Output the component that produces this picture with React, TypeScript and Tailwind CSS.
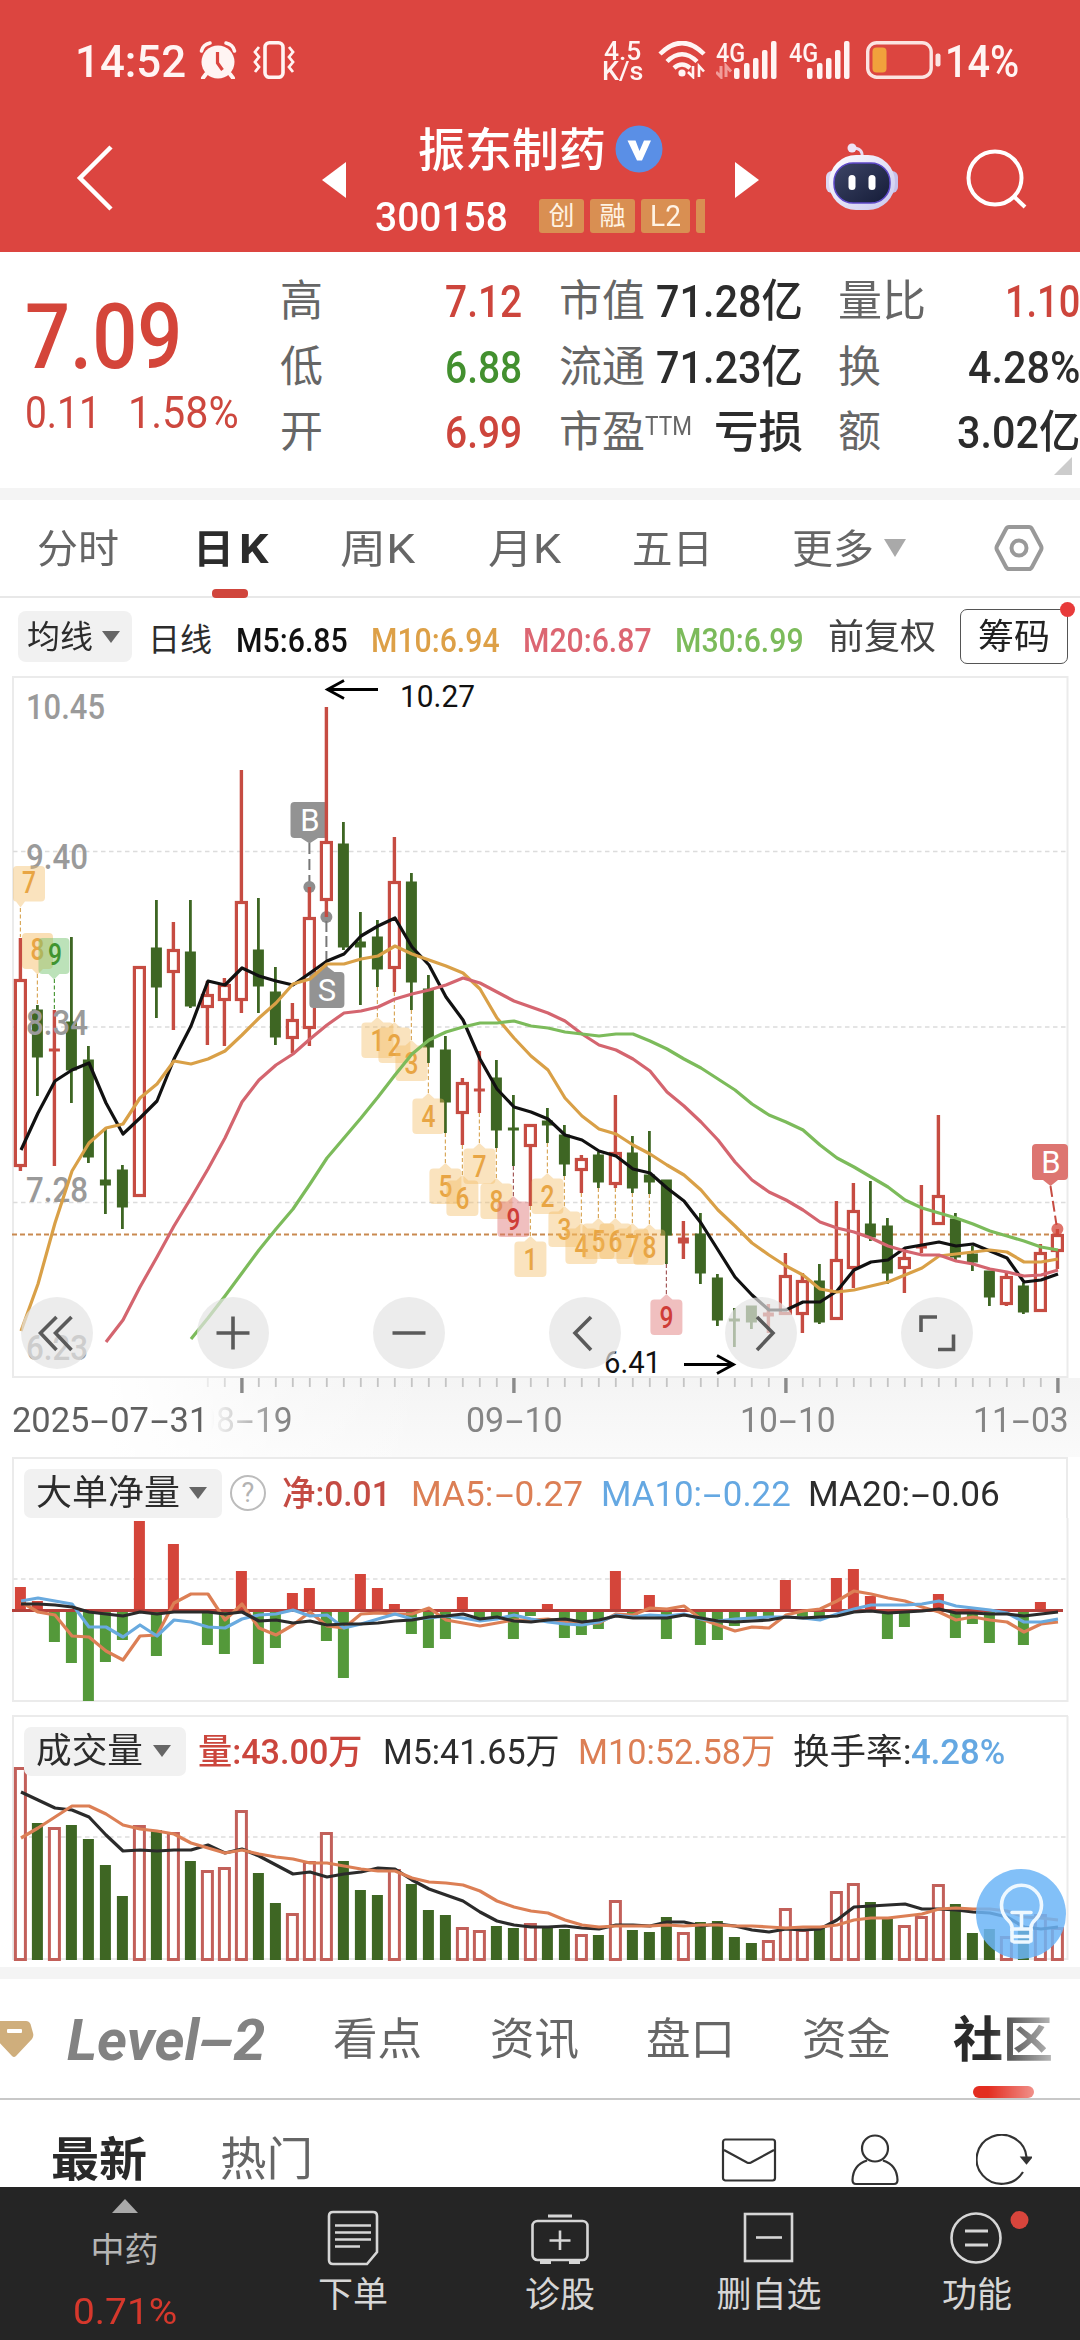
import { useLayoutEffect, useRef, useState, type ReactNode } from "react";

/* ---------- text helpers ---------- */

function wide(text: string): ReactNode {
  return text.split("-").map((part, i) => (
    <span key={i}>
      {i > 0 && (
        <span className="inline-block w-[0.6em] text-center">
          <span className="inline-block scale-x-[1.9]">-</span>
        </span>
      )}
      {part}
    </span>
  ));
}

/* One line of text stretched horizontally to the width of its box. */
function Fit({ className = "", children }: { className?: string; children: string }) {
  const outer = useRef<HTMLSpanElement>(null);
  const inner = useRef<HTMLSpanElement>(null);
  const [scale, setScale] = useState(1);
  useLayoutEffect(() => {
    if (outer.current && inner.current) {
      setScale(outer.current.clientWidth / inner.current.offsetWidth);
    }
  }, []);
  return (
    <span ref={outer} className={`block shrink-0 leading-none ${className}`}>
      <span
        ref={inner}
        className="inline-block origin-left whitespace-nowrap"
        style={{ transform: `scaleX(${scale})` }}
      >
        {children.includes("-") ? wide(children) : children}
      </span>
    </span>
  );
}

/* ---------- chart data ---------- */

type Candle = [kind: "r" | "g", high: number, top: number, bottom: number, low: number];

const X = (i: number) => 20.4 + 17 * i;

const candles: Candle[] = [
  ["r", 939, 980, 1168, 1172], ["g", 1006, 1011, 1059, 1097], ["r", 1011, 1050, 1052, 1167],
  ["g", 938, 1023, 1072, 1104], ["g", 1047, 1061, 1159, 1164], ["g", 1130, 1181, 1187, 1215],
  ["g", 1166, 1171, 1209, 1230], ["r", 967, 967, 1198, 1198], ["g", 901, 949, 989, 1019],
  ["r", 923, 950, 974, 1031], ["g", 901, 953, 1008, 1009], ["r", 982, 995, 1009, 1046],
  ["r", 979, 985, 1002, 1047], ["r", 771, 902, 1002, 1014], ["g", 899, 951, 988, 1014],
  ["g", 968, 993, 1039, 1046], ["r", 1004, 1020, 1040, 1054], ["r", 888, 918, 1030, 1047],
  ["r", 708, 842, 902, 918], ["g", 823, 845, 949, 951], ["g", 913, 943, 949, 1006],
  ["g", 921, 938, 971, 988], ["r", 838, 882, 970, 993], ["g", 874, 883, 984, 1011],
  ["g", 976, 990, 1049, 1064], ["g", 1037, 1051, 1104, 1134], ["r", 1079, 1083, 1115, 1146],
  ["r", 1052, 1090, 1092, 1114], ["g", 1061, 1079, 1132, 1149], ["g", 1096, 1129, 1131, 1167],
  ["r", 1125, 1125, 1148, 1207], ["g", 1109, 1122, 1127, 1144], ["g", 1126, 1136, 1166, 1177],
  ["r", 1156, 1159, 1172, 1194], ["g", 1153, 1156, 1184, 1189], ["r", 1096, 1153, 1186, 1189],
  ["g", 1137, 1154, 1190, 1194], ["g", 1132, 1176, 1184, 1195], ["g", 1181, 1181, 1237, 1265],
  ["r", 1222, 1239, 1245, 1260], ["g", 1214, 1235, 1275, 1285], ["g", 1275, 1279, 1322, 1327],
  ["g", 1309, 1320, 1322, 1348], ["g", 1307, 1307, 1324, 1330], ["r", 1305, 1314, 1318, 1334],
  ["r", 1254, 1276, 1316, 1316], ["r", 1274, 1281, 1316, 1334], ["g", 1265, 1282, 1324, 1325],
  ["r", 1202, 1260, 1321, 1321], ["r", 1184, 1211, 1270, 1289], ["g", 1182, 1225, 1239, 1242],
  ["g", 1219, 1227, 1275, 1285], ["r", 1250, 1258, 1270, 1294], ["r", 1186, 1247, 1250, 1254],
  ["r", 1116, 1196, 1226, 1226], ["g", 1214, 1220, 1259, 1262], ["g", 1247, 1255, 1264, 1272],
  ["g", 1272, 1272, 1299, 1307], ["r", 1274, 1277, 1306, 1307], ["g", 1284, 1287, 1314, 1315],
  ["r", 1245, 1253, 1313, 1313], ["r", 1230, 1235, 1253, 1270],
];

const ma5 = [1151, 1114, 1082, 1071, 1064, 1104, 1135, 1119, 1102, 1060, 1027, 982, 986, 969, 977, 982, 986, 974, 962, 955, 937, 927, 919, 948, 966, 998, 1021, 1060, 1090, 1108, 1113, 1120, 1136, 1141, 1152, 1157, 1170, 1174, 1189, 1202, 1224, 1251, 1278, 1296, 1311, 1311, 1303, 1303, 1292, 1271, 1263, 1261, 1249, 1246, 1243, 1247, 1245, 1252, 1259, 1283, 1281, 1275];
const ma10 = [1332, 1285, 1224, 1172, 1144, 1129, 1125, 1099, 1085, 1062, 1065, 1060, 1052, 1036, 1019, 1004, 985, 980, 965, 965, 960, 957, 947, 955, 961, 967, 974, 990, 1019, 1039, 1057, 1071, 1099, 1117, 1130, 1135, 1146, 1155, 1166, 1176, 1191, 1211, 1227, 1244, 1256, 1267, 1276, 1290, 1293, 1291, 1287, 1283, 1276, 1269, 1257, 1255, 1253, 1251, 1253, 1263, 1263, 1260];
const ma20 = [1343, 1321, 1288, 1258, 1227, 1199, 1170, 1139, 1103, 1081, 1066, 1055, 1040, 1026, 1014, 1012, 1008, 1000, 995, 991, 986, 979, 984, 993, 1002, 1008, 1014, 1022, 1035, 1046, 1051, 1060, 1072, 1093, 1107, 1123, 1141, 1163, 1181, 1193, 1201, 1211, 1223, 1229, 1233, 1239, 1247, 1252, 1256, 1256, 1262, 1265, 1270, 1273, 1277, 1276, 1271];
const ma30 = [1340, 1319, 1297, 1274, 1251, 1230, 1210, 1185, 1159, 1139, 1119, 1098, 1076, 1055, 1041, 1033, 1028, 1024, 1024, 1022, 1027, 1029, 1033, 1035, 1037, 1035, 1035, 1042, 1050, 1060, 1069, 1080, 1091, 1105, 1116, 1123, 1131, 1146, 1159, 1168, 1178, 1188, 1201, 1209, 1214, 1219, 1225, 1232, 1237, 1242, 1248, 1251];

const net = [1588, 1602, 1643, 1664, 1702, 1663, 1641, 1522, 1657, 1545, 1611, 1646, 1655, 1572, 1665, 1649, 1594, 1589, 1642, 1679, 1575, 1589, 1605, 1635, 1649, 1640, 1598, 1620, 1618, 1640, 1617, 1605, 1639, 1636, 1630, 1572, 1617, 1596, 1640, 1611, 1646, 1641, 1627, 1618, 1618, 1581, 1618, 1618, 1579, 1570, 1597, 1640, 1628, 1611, 1595, 1639, 1625, 1644, 1611, 1646, 1603, 1611];
const net5 = [1603, 1613, 1616, 1637, 1638, 1652, 1661, 1637, 1636, 1604, 1595, 1595, 1621, 1605, 1629, 1636, 1626, 1613, 1627, 1629, 1615, 1614, 1615, 1615, 1609, 1621, 1624, 1627, 1624, 1621, 1621, 1620, 1623, 1625, 1624, 1615, 1616, 1609, 1610, 1607, 1620, 1626, 1632, 1628, 1629, 1616, 1612, 1610, 1602, 1592, 1595, 1599, 1602, 1608, 1613, 1621, 1618, 1621, 1623, 1633, 1625, 1623];
const net10 = [1602, 1599, 1602, 1605, 1628, 1628, 1638, 1626, 1637, 1621, 1623, 1628, 1629, 1620, 1616, 1615, 1611, 1617, 1616, 1629, 1625, 1620, 1615, 1620, 1619, 1617, 1619, 1622, 1620, 1616, 1620, 1623, 1625, 1626, 1623, 1616, 1618, 1616, 1617, 1615, 1620, 1622, 1620, 1619, 1618, 1618, 1619, 1621, 1615, 1610, 1606, 1606, 1606, 1605, 1602, 1607, 1609, 1611, 1614, 1623, 1623, 1620];
const net20 = [1605, 1605, 1606, 1608, 1613, 1615, 1617, 1613, 1615, 1613, 1613, 1613, 1615, 1613, 1622, 1621, 1624, 1622, 1626, 1625, 1625, 1624, 1622, 1621, 1618, 1617, 1615, 1620, 1618, 1622, 1623, 1621, 1620, 1623, 1621, 1617, 1619, 1619, 1619, 1616, 1619, 1622, 1623, 1622, 1621, 1618, 1619, 1618, 1617, 1613, 1612, 1614, 1613, 1612, 1610, 1614, 1614, 1615, 1615, 1617, 1615, 1613];

const vol = [1768, 1824, 1828, 1826, 1840, 1866, 1897, 1826, 1831, 1833, 1862, 1871, 1868, 1811, 1874, 1904, 1914, 1862, 1833, 1862, 1891, 1896, 1870, 1885, 1911, 1916, 1928, 1931, 1927, 1929, 1924, 1928, 1930, 1935, 1936, 1901, 1931, 1933, 1918, 1933, 1923, 1922, 1938, 1944, 1941, 1909, 1930, 1929, 1892, 1884, 1903, 1920, 1926, 1917, 1885, 1905, 1934, 1930, 1937, 1930, 1915, 1928];
const vol5 = [1793, 1801, 1809, 1811, 1818, 1836, 1852, 1851, 1852, 1851, 1851, 1846, 1854, 1850, 1857, 1866, 1875, 1873, 1878, 1875, 1873, 1869, 1870, 1881, 1890, 1896, 1902, 1913, 1922, 1926, 1928, 1928, 1927, 1929, 1930, 1926, 1926, 1927, 1923, 1923, 1927, 1925, 1927, 1931, 1933, 1930, 1931, 1930, 1921, 1908, 1907, 1906, 1905, 1910, 1910, 1911, 1913, 1914, 1918, 1928, 1930, 1928];
const vol10 = [1839, 1829, 1818, 1807, 1807, 1815, 1826, 1830, 1832, 1835, 1844, 1849, 1854, 1851, 1855, 1858, 1860, 1864, 1864, 1867, 1870, 1872, 1872, 1879, 1883, 1884, 1886, 1892, 1902, 1908, 1912, 1914, 1921, 1926, 1928, 1927, 1927, 1927, 1926, 1927, 1926, 1926, 1927, 1927, 1928, 1929, 1928, 1928, 1926, 1921, 1919, 1919, 1917, 1915, 1910, 1909, 1910, 1910, 1912, 1918, 1919, 1921];

/* index of candle, digit, tone */
const tagsBelow: [number, string, "o" | "r"][] = [
  [21, "1", "o"], [22, "2", "o"], [23, "3", "o"], [24, "4", "o"], [25, "5", "o"], [26, "6", "o"],
  [27, "7", "o"], [28, "8", "o"], [29, "9", "r"], [30, "1", "o"], [31, "2", "o"], [32, "3", "o"],
  [33, "4", "o"], [34, "5", "o"], [35, "6", "o"], [36, "7", "o"], [37, "8", "o"], [38, "9", "r"],
];

function Line({ data, start = 0, color, width = 3.2 }: { data: number[]; start?: number; color: string; width?: number }) {
  const points = data.map((y, i) => `${X(start + i) + 0.6},${y}`).join(" ");
  return <polyline points={points} fill="none" stroke={color} strokeWidth={width} strokeLinejoin="round" />;
}

function CandleShape({ i, c }: { i: number; c: Candle }) {
  const [kind, high, top, bottom, low] = c;
  const x = X(i);
  if (kind === "g") {
    return (
      <g fill="#3e6623">
        <rect x={x - 1.4} y={high} width={2.8} height={low - high} />
        <rect x={x - 5.5} y={top - 0.5} width={11} height={Math.max(bottom - top, 3)} />
      </g>
    );
  }
  if (bottom - top < 8) {
    return (
      <g fill="#c64c42">
        <rect x={x - 1.7} y={high} width={3.4} height={low - high} />
        <rect x={x - 5.5} y={top - 0.5} width={11} height={Math.max(bottom - top, 3)} />
      </g>
    );
  }
  return (
    <g>
      <rect x={x - 1.7} y={high} width={3.4} height={top - high} fill="#c64c42" />
      <rect x={x - 1.7} y={bottom} width={3.4} height={low - bottom} fill="#c64c42" />
      <rect x={x - 5} y={top + 1.5} width={10} height={bottom - top - 3} fill="#fff" stroke="#c64c42" strokeWidth={3.2} />
    </g>
  );
}

function DigitTag({ i, digit, tone }: { i: number; digit: string; tone: "o" | "r" }) {
  const x = X(i);
  const low = candles[i][4];
  const red = tone === "r";
  return (
    <g>
      <line x1={x} x2={x} y1={low} y2={low + 30} stroke={red ? "#a45a5a" : "#d9a95c"} strokeWidth={1.2} strokeDasharray="4 2.5" />
      <path
        d={`M${x} ${low + 30} l6 5.5 h6 q4 0 4 4 v27.500 q0 4 -4 4 h-24 q-4 0 -4 -4 v-27.500 q0 -4 4 -4 h6 z`}
        fill={red ? "#dd7070" : "#f3b95c"}
        fillOpacity={red ? 0.45 : 0.4}
      />
      <text x={x} y={low + 64} textAnchor="middle" fontSize={31} fontWeight={500} fill={red ? "#cf3d38" : "#e8a544"} textLength={14} lengthAdjust="spacingAndGlyphs">
        {digit}
      </text>
    </g>
  );
}

function PriceChart() {
  const axis: [string, number, number][] = [["10.45", 720, 79], ["9.40", 870, 62], ["8.34", 1036, 62], ["7.28", 1203, 62], ["6.23", 1361, 62]];
  return (
    <svg viewBox="0 672 1080 708" className="block h-[708px] w-[1080px] overflow-visible" fontFamily='Roboto, "Noto Sans CJK SC", sans-serif'>
      <rect x={13} y={678} width={1054.500} height={700} fill="none" stroke="#ebebeb" strokeWidth={2} />
      {[852.500, 1028, 1203.500].map((y) => (
        <line key={y} x1={13} x2={1067} y1={y} y2={y} stroke="#dcdcdc" strokeWidth={1.3} strokeDasharray="4.500 3.500" />
      ))}
      <line x1={12} x2={1060} y1={1235.500} y2={1235.500} stroke="#c98a50" strokeWidth={2.2} strokeDasharray="5 3" />

      {/* trade marks */}
      <g>
        <path d="M295 803 h29 q4 0 4 4 v28 q0 4 -4 4 h-6 l-8.500 5.500 l-8.500 -5.500 h-6.500 q-4 0 -4 -4 v-28 q0 -4 4 -4z" fill="#939393" />
        <text x={310} y={832} textAnchor="middle" fontSize={31} fill="#fff">B</text>
        <line x1={309.400} x2={309.400} y1={844} y2={884} stroke="#777" strokeWidth={2} strokeDasharray="11 5" />
        <circle cx={309.400} cy={888} r={6} fill="#8e8e8e" />
        <circle cx={326.400} cy={918} r={6} fill="#8e8e8e" />
      </g>

      {candles.map((c, i) => <CandleShape key={i} i={i} c={c} />)}

      <g>
        <line x1={326.400} x2={326.400} y1={922} y2={968} stroke="#777" strokeWidth={2} strokeDasharray="11 4" />
        <path d="M326.400 967 l8 6 h6 q4 0 4 4 v28 q0 4 -4 4 h-27 q-4 0 -4 -4 v-28 q0 -4 4 -4 h5z" fill="#939393" />
        <text x={327} y={1002} textAnchor="middle" fontSize={31} fill="#fff">S</text>
      </g>

      {axis.map(([label, y, w]) => (
        <text key={label} x={26} y={y} fontSize={35} fontWeight={500} fill="#9a9a9a" textLength={w} lengthAdjust="spacingAndGlyphs">{label}</text>
      ))}

      {/* digit marks above the first candles */}
      <g fontSize={31} fontWeight={500} textAnchor="middle">
        <line x1={20.400} x2={20.400} y1={909} y2={938} stroke="#d9a95c" strokeWidth={1.2} strokeDasharray="4 2.500" />
        <path d="M17 867 h24 q4 0 4 4 v27.500 q0 4 -4 4 h-16 l-4.500 6 l-4.500 -6 q-3 0 -3 -4 v-27.500 q0 -4 4 -4z" fill="#f3b95c" fillOpacity={0.4} />
        <text x={29} y={894} fill="#e8a544" textLength={14} lengthAdjust="spacingAndGlyphs">7</text>
        <line x1={37.400} x2={37.400} y1={975} y2={1006} stroke="#d9a95c" strokeWidth={1.2} strokeDasharray="4 2.500" />
        <path d="M26 934 h23 q4 0 4 4 v28 q0 4 -4 4 h-6 l-5.500 5.500 l-5.500 -5.500 h-6 q-4 0 -4 -4 v-28 q0 -4 4 -4z" fill="#f3b95c" fillOpacity={0.45} />
        <text x={37.400} y={961} fill="#e8a544" textLength={14} lengthAdjust="spacingAndGlyphs">8</text>
        <line x1={54.400} x2={54.400} y1={980} y2={1011} stroke="#4f9a3c" strokeWidth={1.2} strokeDasharray="4 2.500" />
        <path d="M42.500 939 h23 q4 0 4 4 v28 q0 4 -4 4 h-6 l-5.500 5.500 l-5.500 -5.500 h-6 q-4 0 -4 -4 v-28 q0 -4 4 -4z" fill="#79c673" fillOpacity={0.5} />
        <text x={55} y={966} fill="#3f9430" textLength={14} lengthAdjust="spacingAndGlyphs">9</text>
      </g>

      {tagsBelow.map(([i, d, t]) => <DigitTag key={i} i={i} digit={d} tone={t} />)}

      <Line data={ma5} color="#111" />
      <Line data={ma10} color="#d9a047" />
      <Line data={ma20} start={5} color="#d4656f" />
      <Line data={ma30} start={10} color="#7cbb5b" />

      {/* extremes */}
      <path d="M378 690.500 H328 M344 681.500 L327.500 690.500 L344 699.500" fill="none" stroke="#000" strokeWidth={2.8} />
      <text x={400} y={708} fontSize={31} fill="#111" textLength={75} lengthAdjust="spacingAndGlyphs">10.27</text>
      <path d="M684 1365.500 H733 M717 1356.500 L733.500 1365.500 L717 1374.500" fill="none" stroke="#000" strokeWidth={2.8} />
      <text x={604} y={1374} fontSize={31} fill="#111" textLength={57} lengthAdjust="spacingAndGlyphs">6.41</text>

      {/* latest trade */}
      <path d="M1036 1145 h28 q4 0 4 4 v28 q0 4 -4 4 h-6 l-7.500 6 l-7.500 -6 h-7 q-4 0 -4 -4 v-28 q0 -4 4 -4z" fill="#dd7571" />
      <text x={1051} y={1174} textAnchor="middle" fontSize={31} fill="#fff">B</text>
      <line x1={1050.500} x2={1056.500} y1={1187} y2={1226} stroke="#c64c42" strokeWidth={2} strokeDasharray="11 4" />
      <circle cx={1057.400} cy={1230} r={6} fill="#d4453a" fillOpacity={0.75} />
    </svg>
  );
}

function RoundButton({ children }: { children: ReactNode }) {
  return (
    <button className="flex size-[72px] items-center justify-center rounded-full bg-[rgba(227,227,227,0.69)]">
      <svg viewBox="0 0 72 72" className="size-[72px]" fill="none" stroke="#5a5a5a" strokeWidth={3.6}>{children}</svg>
    </button>
  );
}

function Ticks() {
  return (
    <svg viewBox="0 1379 1080 16" className="block h-[16px] w-[1080px]">
      {candles.map((_, i) => {
        if (i < 11) return null;
        const major = i % 16 === 13;
        return (
          <rect key={i} x={X(i) + 0.5 - (major ? 1.7 : 1)} y={1379} width={major ? 3.4 : 1.8} height={major ? 15 : 9}
            fill={major ? "#8a8a8a" : "#c4c4c4"} opacity={i === 11 ? 0.3 : i === 12 ? 0.6 : 1} />
        );
      })}
    </svg>
  );
}

function NetChart() {
  return (
    <svg viewBox="0 1519 1080 186" className="block h-[186px] w-[1080px]">
      <path d="M13 1519 V1702 H1067.500 V1519" fill="none" stroke="#ebebeb" strokeWidth={2} />
      <line x1={13} x2={1067} y1={1580} y2={1580} stroke="#e6e6e6" strokeWidth={2} strokeDasharray="4.500 3.500" />
      {net.map((y, i) => (
        <rect key={i} x={X(i) - 5.5} y={Math.min(y, 1611)} width={11} height={Math.abs(y - 1611)} fill={y < 1611 ? "#d4453a" : "#54993a"} />
      ))}
      <rect x={12} y={1610} width={1051} height={3} fill="#b5403a" />
      <Line data={net5} color="#dc7f55" />
      <Line data={net10} color="#69aadf" />
      <Line data={net20} color="#2b2b2b" />
    </svg>
  );
}

function VolumeChart() {
  return (
    <svg viewBox="0 1716 1080 250" className="absolute inset-x-0 top-0 block h-[250px] w-[1080px]">
      <path d="M13 1717 V1960 H1067.500 V1717" fill="none" stroke="#ebebeb" strokeWidth={2} />
      <line x1={13} x2={1067} y1={1838} y2={1838} stroke="#e6e6e6" strokeWidth={2} strokeDasharray="4.500 3.500" />
      {vol.map((y, i) =>
        candles[i][0] === "r" ? (
          <rect key={i} x={X(i) - 5} y={y + 1.5} width={10} height={1960 - y - 1} fill="#fff" stroke="#c2605a" strokeWidth={3} />
        ) : (
          <rect key={i} x={X(i) - 5.5} y={y} width={11} height={1961 - y} fill="#3e6623" />
        )
      )}
      <Line data={vol5} color="#2b2b2b" />
      <Line data={vol10} color="#dc7f55" />
    </svg>
  );
}

/* ---------- page pieces ---------- */

function StatusBar() {
  return (
    <div className="flex h-[79px] items-end pl-[75px]">
      <div className="flex h-[38px] w-full items-center font-medium text-[#fff4f3]">
        <Fit className="mt-[3px] w-[111px] text-[45px]">14:52</Fit>
        <svg viewBox="0 0 38 38" className="ml-[13px] h-[38px] w-[38px]" fill="none" stroke="#fff4f3">
          <circle cx="19" cy="21" r="16.500" fill="#fff4f3" stroke="none" />
          <path d="M2.500 10 Q4 3.500 11 2 M35.500 10 Q34 3.500 27 2" strokeWidth="3.500" strokeLinecap="round" />
          <path d="M7 33 l-3 4 M31 33 l3 4" strokeWidth="4" strokeLinecap="round" />
          <path d="M18.500 11 v11 l5 7" stroke="#dc4540" strokeWidth="3.200" />
        </svg>
        <svg viewBox="0 0 44 38" className="ml-[15px] h-[38px] w-[44px]" fill="none" stroke="#fff4f3">
          <rect x="13" y="1.800" width="18" height="34.500" rx="4.500" strokeWidth="3.600" />
          <path d="M7 6 L3 11 L7 16 L3 21 L7 26 L3 31 M37 6 L41 11 L37 16 L41 21 L37 26 L41 31" strokeWidth="2.800" />
        </svg>
        <div className="ml-[306px] -mt-[3px] flex flex-col items-center">
          <Fit className="h-[20px] w-[37px] text-[25px] leading-[20px]">4.5</Fit>
          <Fit className="h-[20px] w-[41px] text-[25px] leading-[20px]">K/s</Fit>
        </div>
        <svg viewBox="0 0 48 38" className="ml-[15px] h-[38px] w-[48px]" fill="none" stroke="#fff4f3" strokeWidth="4.500">
          <path d="M2 13 Q24 -9 46 13" />
          <path d="M9 20.500 Q24 6 39 20.500" />
          <path d="M16 27 Q24 20 32 27" />
          <circle cx="24" cy="32" r="3.600" fill="#fff4f3" stroke="none" />
          <path d="M35 25 v11 l-5 -5 M41 36 v-11 l5 5.500" strokeWidth="2.600" />
        </svg>
        <Signal className="ml-[10px]" faded />
        <Signal className="ml-[11px]" />
        <svg viewBox="0 0 76 38" className="ml-[15px] h-[38px] w-[76px]">
          <rect x="1.700" y="1.700" width="63.500" height="34.500" rx="9" fill="none" stroke="#fbe3e1" strokeWidth="3.400" />
          <rect x="6.500" y="6.500" width="14" height="25" rx="4" fill="#f1a13c" />
          <rect x="69.500" y="12.500" width="5" height="13" rx="2" fill="#fbe3e1" />
        </svg>
        <Fit className="mt-[3px] ml-[3px] w-[74px] text-[45px]">14%</Fit>
      </div>
    </div>
  );
}

function Signal({ className, faded = false }: { className: string; faded?: boolean }) {
  return (
    <span className={`relative block h-[38px] w-[62px] ${className}`}>
      <Fit className="w-[29px] text-[25px]">4G</Fit>
      <svg viewBox="0 0 62 38" className="absolute left-0 top-0 h-[38px] w-[62px]" fill="#fff4f3">
        {faded && <path d="M5 25 v11 l-5 -5 M10 36 v-11 l5 5.500" fill="none" stroke="#f19c99" strokeWidth="3" />}
        <rect x="18" y="27" width="5.500" height="11" rx="2" />
        <rect x="28" y="22" width="5.500" height="16" rx="2" />
        <rect x="37" y="17" width="5.500" height="21" rx="2" />
        <rect x="46" y="9" width="5.500" height="29" rx="2" />
        <rect x="55" y="0" width="5.500" height="38" rx="2" />
      </svg>
    </span>
  );
}

function Header() {
  return (
    <div className="flex h-[173px] text-white">
      <svg viewBox="0 0 38 66" className="ml-[76px] mt-[66px] h-[66px] w-[38px]" fill="none" stroke="#fff" strokeWidth="4.500">
        <path d="M35 2 L4 33 L35 64" />
      </svg>
      <svg viewBox="0 0 24 36" className="ml-[208px] mt-[83px] h-[36px] w-[24px]" fill="#fff"><path d="M24 0 V36 L0 18z" /></svg>
      <div className="ml-[28px] flex w-[337px] flex-col">
        <div className="mt-[46px] flex h-[48px] items-center pl-[44px]">
          <Fit className="mt-[2px] w-[188px] text-[46px] font-medium">振东制药</Fit>
          <svg viewBox="0 0 48 48" className="ml-[9px] size-[48px]">
            <circle cx="24" cy="24" r="23.500" fill="#5a8fe6" />
            <path d="M12.500 15.500 h8 l4 10.500 l4.500 -10.500 h7 l-9 20 h-5z" fill="#fff" />
          </svg>
        </div>
        <div className="mt-[26px] flex h-[34px] items-center">
          <Fit className="mt-[3px] ml-[1px] w-[133px] text-[41px] font-medium">300158</Fit>
          <div className="ml-[31px] flex gap-[6px] text-[29px] text-[#fff3e4]">
            <span className="flex h-[34px] w-[45px] items-center justify-center rounded-[3px] bg-[#d98f52] text-[26px] leading-none">创</span>
            <span className="flex h-[34px] w-[45px] items-center justify-center rounded-[3px] bg-[#d98f52] text-[26px] leading-none">融</span>
            <span className="flex h-[34px] w-[49px] items-center justify-center rounded-[3px] bg-[#d98f52] leading-none">
              <Fit className="w-[31px]">L2</Fit>
            </span>
            <span className="h-[34px] w-[9px] rounded-l-[3px] bg-[#d98f52]" />
          </div>
        </div>
      </div>
      <svg viewBox="0 0 24 36" className="ml-[24px] mt-[83px] h-[36px] w-[24px]" fill="#fff"><path d="M0 0 V36 L24 18z" /></svg>
      <svg viewBox="0 0 74 68" className="ml-[66px] mt-[64px] h-[68px] w-[74px]">
        <defs>
          <linearGradient id="shell" x1="0" y1="0" x2="1" y2="1"><stop offset="0" stopColor="#fff" /><stop offset="1" stopColor="#c9c6ee" /></linearGradient>
          <linearGradient id="visor" x1="0" y1="0" x2="1" y2="1"><stop offset="0" stopColor="#3d4566" /><stop offset="1" stopColor="#151c38" /></linearGradient>
        </defs>
        <path d="M37 14 Q38 5 28 5" fill="none" stroke="#e9dcf2" strokeWidth="3" />
        <circle cx="27" cy="5" r="4.500" fill="#eee3f6" />
        <rect x="1" y="28" width="12" height="22" rx="6" fill="#dcd8f4" />
        <rect x="61" y="28" width="12" height="22" rx="6" fill="#c5c0ea" />
        <rect x="4" y="12" width="66" height="55" rx="27" fill="url(#shell)" />
        <rect x="9" y="20" width="56" height="40" rx="19" fill="url(#visor)" stroke="#5d48c8" strokeWidth="1.500" />
        <rect x="23.500" y="32" width="7" height="15" rx="3.500" fill="#fff" />
        <rect x="43.500" y="32" width="7" height="15" rx="3.500" fill="#fff" />
      </svg>
      <svg viewBox="0 0 62 62" className="ml-[67px] mt-[69px] size-[62px]" fill="none" stroke="#fff" strokeWidth="4">
        <circle cx="29" cy="30" r="26.500" />
        <path d="M48.500 49 L59 59" />
      </svg>
    </div>
  );
}

function Quote() {
  return (
    <section className="flex h-[237px] bg-white">
      <div className="flex w-[280px] flex-col pl-[25px] text-[#cd473e]">
        <Fit className="mt-[41px] w-[157px] text-[90px] font-medium text-[#d4453a]">7.09</Fit>
        <div className="mt-[7px] flex">
          <Fit className="w-[76px] text-[45px]">0.11</Fit>
          <Fit className="ml-[27px] w-[111px] text-[45px]">1.58%</Fit>
        </div>
      </div>
      <div className="mt-[17px] flex w-[242px] flex-col text-[43px] leading-none text-[#666]">
        {[["高", "7.12", "text-[#cd453c]"], ["低", "6.88", "text-[#43902f]"], ["开", "6.99", "text-[#cd453c]"]].map(([k, v, c]) => (
          <div key={k} className="flex h-[65.500px] items-center justify-between">
            <span>{k}</span>
            <Fit className={`w-[77px] text-[45px] font-medium ${c}`}>{v}</Fit>
          </div>
        ))}
      </div>
      <div className="ml-[37px] mt-[17px] flex w-[244px] flex-col text-[43px] leading-none text-[#666]">
        {[["市值", "71.28亿"], ["流通", "71.23亿"]].map(([k, v]) => (
          <div key={k} className="flex h-[65.500px] items-center justify-between">
            <span>{k}</span>
            <Fit className="w-[147px] text-[45px] font-medium text-[#2c2c2c]">{v}</Fit>
          </div>
        ))}
        <div className="flex h-[65.500px] items-center">
          <span>市盈</span>
          <Fit className="-mt-[14px] w-[47px] text-[26px]">TTM</Fit>
          <Fit className="ml-auto w-[89px] text-[44px] font-medium text-[#2c2c2c]">亏损</Fit>
        </div>
      </div>
      <div className="ml-[35px] mt-[17px] flex w-[242px] flex-col text-[43px] leading-none text-[#666]">
        <div className="flex h-[65.500px] items-center justify-between">
          <Fit className="w-[88px]">量比</Fit>
          <Fit className="w-[75px] text-[45px] font-medium text-[#cd453c]">1.10</Fit>
        </div>
        <div className="flex h-[65.500px] items-center justify-between">
          <span>换</span>
          <Fit className="w-[112px] text-[45px] font-medium text-[#2c2c2c]">4.28%</Fit>
        </div>
        <div className="flex h-[65.500px] items-center justify-between">
          <span>额</span>
          <Fit className="w-[123px] text-[45px] font-medium text-[#2c2c2c]">3.02亿</Fit>
        </div>
        <svg viewBox="0 0 18 18" className="-mt-[9px] mr-[8px] size-[18px] shrink-0 self-end" fill="#ccc"><path d="M18 0 V18 H0z" /></svg>
      </div>
    </section>
  );
}

function PeriodTabs() {
  return (
    <nav className="flex h-[98px] items-center border-b-2 border-[#e8e8e8] bg-white text-[40px] text-[#666]">
      <Fit className="ml-[37px] mt-[3px] w-[82px]">分时</Fit>
      <div className="relative ml-[74px] mt-[3px] flex font-bold text-[#2c2c2c]">
        <Fit className="w-[41px]">日</Fit>
        <Fit className="ml-[5px] w-[29px]">K</Fit>
        <span className="absolute -bottom-[28px] left-[19px] h-[9px] w-[36px] rounded-[4px] bg-[#d0453c]" />
      </div>
      <Fit className="ml-[72px] mt-[3px] w-[75px]">周K</Fit>
      <Fit className="ml-[73px] mt-[3px] w-[73px]">月K</Fit>
      <Fit className="ml-[71px] mt-[3px] w-[81px]">五日</Fit>
      <Fit className="ml-[79px] mt-[3px] w-[82px]">更多</Fit>
      <svg viewBox="0 0 24 20" className="ml-[9px] h-[20px] w-[24px]" fill="#a9a9a9"><path d="M1 1 H23 L12 19z" /></svg>
      <svg viewBox="0 0 50 48" className="ml-[87px] h-[48px] w-[50px]" fill="none" stroke="#999" strokeWidth="4">
        <path d="M15 3 H35 Q37 3 38 5 L47 22 Q48 24 47 26 L38 43 Q37 45 35 45 H15 Q13 45 12 43 L3 26 Q2 24 3 22 L12 5 Q13 3 15 3z" strokeLinejoin="round" />
        <circle cx="25" cy="24" r="7.500" />
      </svg>
    </nav>
  );
}

function Caret() {
  return <svg viewBox="0 0 18 12" className="h-[12px] w-[18px] shrink-0" fill="#666"><path d="M0 0 H18 L9 12z" /></svg>;
}

function IndicatorRow() {
  return (
    <div className="flex h-[73px] items-center bg-white pt-[4px] text-[32px] font-medium">
      <div className="ml-[18px] flex h-[51px] w-[114px] items-center rounded-[8px] bg-[#f1f1f1] pl-[9px] font-normal text-[#2c2c2c]">
        <Fit className="w-[66px]">均线</Fit>
        <span className="ml-[9px]"><Caret /></span>
      </div>
      <Fit className="ml-[16px] mt-[6px] w-[64px] font-normal text-[#2c2c2c]">日线</Fit>
      <Fit className="ml-[24px] mt-[7px] w-[112px] text-[33px] text-[#111]">M5:6.85</Fit>
      <Fit className="ml-[23px] mt-[7px] w-[129px] text-[33px] text-[#dda047]">M10:6.94</Fit>
      <Fit className="ml-[23px] mt-[7px] w-[129px] text-[33px] text-[#dc6672]">M20:6.87</Fit>
      <Fit className="ml-[23px] mt-[7px] w-[129px] text-[33px] text-[#7cbb5b]">M30:6.99</Fit>
      <Fit className="ml-[24px] mt-[2px] w-[108px] text-[35px] font-normal text-[#444]">前复权</Fit>
      <div className="relative ml-[24px] flex h-[55px] w-[108px] items-center justify-center rounded-[7px] border-[1.500px] border-[#555] font-normal text-[#222]">
        <Fit className="mt-[2px] w-[72px] text-[35px]">筹码</Fit>
        <span className="absolute -right-[8px] -top-[8px] size-[15px] rounded-full bg-[#e83b3b]" />
      </div>
    </div>
  );
}

function BottomItem({ label, children, className }: { label: string; children: ReactNode; className: string }) {
  return (
    <div className={`flex flex-col items-center pt-[23px] ${className}`}>
      <svg viewBox="0 0 60 56" className="h-[56px] w-[60px] overflow-visible" fill="none" stroke="#d6d6d6" strokeWidth="2.600">{children}</svg>
      <span className="mt-[12px] whitespace-nowrap text-[35px] leading-none text-[#d6d6d6]">{label}</span>
    </div>
  );
}

export default function App() {
  return (
    <main className="flex h-[2340px] w-[1080px] flex-col overflow-hidden bg-white font-[Roboto,'Noto_Sans_CJK_SC',sans-serif]">
      <header className="h-[252px] shrink-0 bg-[#dc4540]">
        <StatusBar />
        <Header />
      </header>
      <Quote />
      <div className="h-[12px] shrink-0 bg-[#f4f4f4]" />
      <PeriodTabs />
      <IndicatorRow />

      <div className="relative h-[707px] shrink-0">
        <PriceChart />
        <div className="absolute left-[21px] top-[626px] flex gap-[104px]">
          <RoundButton><path d="M35.500 20 L19.500 36 L35.500 53 M50.500 20 L34.500 36 L50.500 53" /></RoundButton>
          <RoundButton><path d="M36 19.500 V52.500 M19.500 36 H52.500" /></RoundButton>
          <RoundButton><path d="M19.500 36 H52.500" /></RoundButton>
          <RoundButton><path d="M42 20 L26 36 L42 53" /></RoundButton>
          <RoundButton><path d="M32 20 L48 36 L32 53" /></RoundButton>
          <RoundButton><path d="M20 35 V20 H36 M52.500 37.500 V52.500 H37" /></RoundButton>
        </div>
      </div>

      <div className="h-[79px] shrink-0 bg-gradient-to-b from-[#f4f4f4] to-[#fafafa]">
        <div className="h-full bg-gradient-to-r from-white from-10% via-white/40 via-25% to-transparent to-40%">
          <Ticks />
          <div className="flex pt-[9px] text-[35px] text-[#858585]">
            <Fit className="ml-[12px] w-[196px] text-[#606060]">2025-07-31</Fit>
            <Fit className="-ml-[11px] w-[96px] [mask-image:linear-gradient(to_right,transparent_14px,#000_85px)]">08-19</Fit>
            <Fit className="ml-[173px] w-[97px]">09-10</Fit>
            <Fit className="ml-[177px] w-[96px]">10-10</Fit>
            <Fit className="ml-[137px] w-[96px]">11-03</Fit>
          </div>
        </div>
      </div>

      <section className="h-[248px] shrink-0">
        <div className="mx-[12px] flex h-[61px] items-center border-x-2 border-t-2 border-[#ebebeb] pl-[10px] pt-[9px] text-[35px]">
          <div className="flex h-[49px] w-[198px] items-center rounded-[7px] bg-[#f1f1f1] pl-[12px] text-[#2c2c2c]">
            <Fit className="w-[144px]">大单净量</Fit>
            <span className="ml-[9px]"><Caret /></span>
          </div>
          <span className="ml-[8px] flex size-[36px] items-center justify-center rounded-full border-[2.500px] border-[#bcbcbc] text-[27px] leading-none text-[#b3b3b3]">?</span>
          <Fit className="ml-[16px] mt-[2px] w-[109px] font-medium text-[#c44b43]">净:0.01</Fit>
          <Fit className="ml-[20px] mt-[2px] w-[172px] text-[#dc7f55]">MA5:-0.27</Fit>
          <Fit className="ml-[18px] mt-[2px] w-[190px] text-[#65a8e2]">MA10:-0.22</Fit>
          <Fit className="ml-[17px] mt-[2px] w-[192px] text-[#2c2c2c]">MA20:-0.06</Fit>
        </div>
        <NetChart />
      </section>

      <div className="h-[10px] shrink-0" />
      <section className="relative h-[252px] shrink-0 bg-white">
        <VolumeChart />
        <div className="relative mx-[12px] flex h-[62px] items-center border-t-2 border-[#ebebeb] pl-[12px] pt-[8px] text-[35px] text-[#2c2c2c]">
          <div className="flex h-[49px] w-[162px] items-center rounded-[7px] bg-[#f1f1f1] pl-[12px]">
            <Fit className="w-[107px]">成交量</Fit>
            <span className="ml-[10px]"><Caret /></span>
          </div>
          <Fit className="ml-[12px] mt-[2px] w-[165px] font-medium text-[#cb463d]">量:43.00万</Fit>
          <Fit className="ml-[20px] mt-[2px] w-[177px]">M5:41.65万</Fit>
          <Fit className="ml-[18px] mt-[2px] w-[197px] text-[#dc7f55]">M10:52.58万</Fit>
          <Fit className="ml-[18px] mt-[2px] w-[118px]">换手率:</Fit>
          <Fit className="mt-[2px] w-[94px] font-medium text-[#65a8e2]">4.28%</Fit>
        </div>
        <svg viewBox="0 0 90 90" className="absolute left-[976px] top-[154px] size-[90px]" fill="none" stroke="#eef8ff" strokeWidth="3.600" strokeLinejoin="round">
          <circle cx="45" cy="45" r="45" fill="#6cb5f7" fillOpacity="0.85" stroke="none" />
          <path d="M36 62 V58 Q35.500 54 31 50 A20 20 0 1 1 60 50 Q55.500 54 55 58 V62" />
          <path d="M36 60 V72 M55 60 V72 M36 67.500 H55 M38 73 H53 M36 43.500 H55 M45.500 43.500 V60 M36 60 H55" strokeLinecap="round" />
        </svg>
      </section>

      <div className="h-[12px] shrink-0 bg-[#f4f4f4]" />
      <nav className="flex h-[121px] shrink-0 items-center border-b-2 border-[#c8c8c8] text-[44px] text-[#666]">
        <svg viewBox="0 0 34 36" className="h-[36px] w-[34px]">
          <path d="M-4 0 H26 Q29 0 30.500 3 L33 12 Q34 15 32 18 L16 35 Q14 37 12 35 L-6 16z" fill="#cfae7c" />
          <rect x="7" y="8" width="15" height="4" rx="1" fill="#fff" />
        </svg>
        <Fit className="ml-[33px] mt-[3px] w-[198px] text-[57px] font-bold italic text-[#828282]">Level-2</Fit>
        <Fit className="ml-[68px] mt-[3px] w-[89px]">看点</Fit>
        <Fit className="ml-[68px] mt-[3px] w-[89px]">资讯</Fit>
        <Fit className="ml-[67px] mt-[3px] w-[89px]">盘口</Fit>
        <Fit className="ml-[67px] mt-[3px] w-[89px]">资金</Fit>
        <div className="relative ml-[62px] h-full w-[100px] [mask-image:linear-gradient(to_right,#000_35px,rgba(0,0,0,0.35)_98px)]">
          <Fit className="w-[100px] pt-[37px] text-[49px] font-bold text-[#2a2a2a]">社区</Fit>
          <span className="absolute bottom-0 left-[20px] h-[12px] w-[61px] rounded-[6px] bg-[#e32d20]" />
        </div>
      </nav>

      <div className="flex h-[87px] shrink-0 items-start pt-[36px]">
        <Fit className="ml-[51px] w-[96px] text-[47px] font-bold text-[#2a2a2a]">最新</Fit>
        <Fit className="ml-[73px] w-[93px] text-[46px] text-[#666]">热门</Fit>
        <svg viewBox="0 0 56 44" className="ml-[408px] mt-[2px] h-[44px] w-[56px]" fill="none" stroke="#333" strokeWidth="2.200">
          <rect x="2" y="1.500" width="52" height="41" rx="2.500" />
          <path d="M3 12 L26 24.500 Q28 25.500 30 24.500 L53 12" />
        </svg>
        <svg viewBox="0 0 50 52" className="-mt-[2px] ml-[73px] h-[52px] w-[50px]" fill="none" stroke="#333" strokeWidth="2.200">
          <circle cx="25" cy="14.500" r="13" />
          <path d="M17 26.500 Q3 31 2.500 46 Q2.500 50 6 50 H44 Q47.500 50 47.500 46 Q47 31 33 26.500" />
        </svg>
        <svg viewBox="0 0 56 52" className="-mt-[2px] ml-[76px] h-[52px] w-[56px]" fill="none" stroke="#333" strokeWidth="2.200">
          <path d="M47 38 A25 24.500 0 1 1 50.500 23" />
          <path d="M46 23.500 H55 L50.500 29z" fill="#333" />
        </svg>
      </div>

      <footer className="flex h-[153px] shrink-0 bg-[#252525]">
        <div className="flex w-[249px] flex-col items-center pt-[12px]">
          <svg viewBox="0 0 26 14" className="h-[14px] w-[26px]" fill="#a9a9a9"><path d="M13 0 L26 14 H0z" /></svg>
          <span className="mt-[20px] text-[34px] leading-none text-[#b5b5b5]">中药</span>
          <Fit className="mt-[26px] w-[104px] text-[37px] text-[#d6382c]">0.71%</Fit>
        </div>
        <BottomItem label="下单" className="ml-[24px] w-[160px]">
          <path d="M10 2 H50 Q54 2 54 6 V42 L44 54 H10 Q6 54 6 50 V6 Q6 2 10 2z" />
          <path d="M12 15.500 H48 M12 22.500 H48 M12 29.500 H48 M12 36.500 H37" />
        </BottomItem>
        <BottomItem label="诊股" className="ml-[47px] w-[160px]">
          <rect x="2.500" y="11" width="55" height="39" rx="5" />
          <path d="M18 6 H42" strokeWidth="3" />
          <path d="M30 20.500 V40 M19.500 30.500 H40.500" />
          <path d="M10 52 H21 M39 52 H50" strokeWidth="4" />
        </BottomItem>
        <BottomItem label="删自选" className="ml-[49px] w-[160px]">
          <rect x="6" y="4" width="47" height="47" />
          <path d="M17 27.500 H43" />
        </BottomItem>
        <BottomItem label="功能" className="ml-[48px] w-[160px]">
          <circle cx="29" cy="28" r="24.500" />
          <path d="M18 21 H41 M18 35 H41" strokeWidth="3" />
          <circle cx="72.500" cy="10" r="9" fill="#d8453c" stroke="none" />
        </BottomItem>
      </footer>
    </main>
  );
}
